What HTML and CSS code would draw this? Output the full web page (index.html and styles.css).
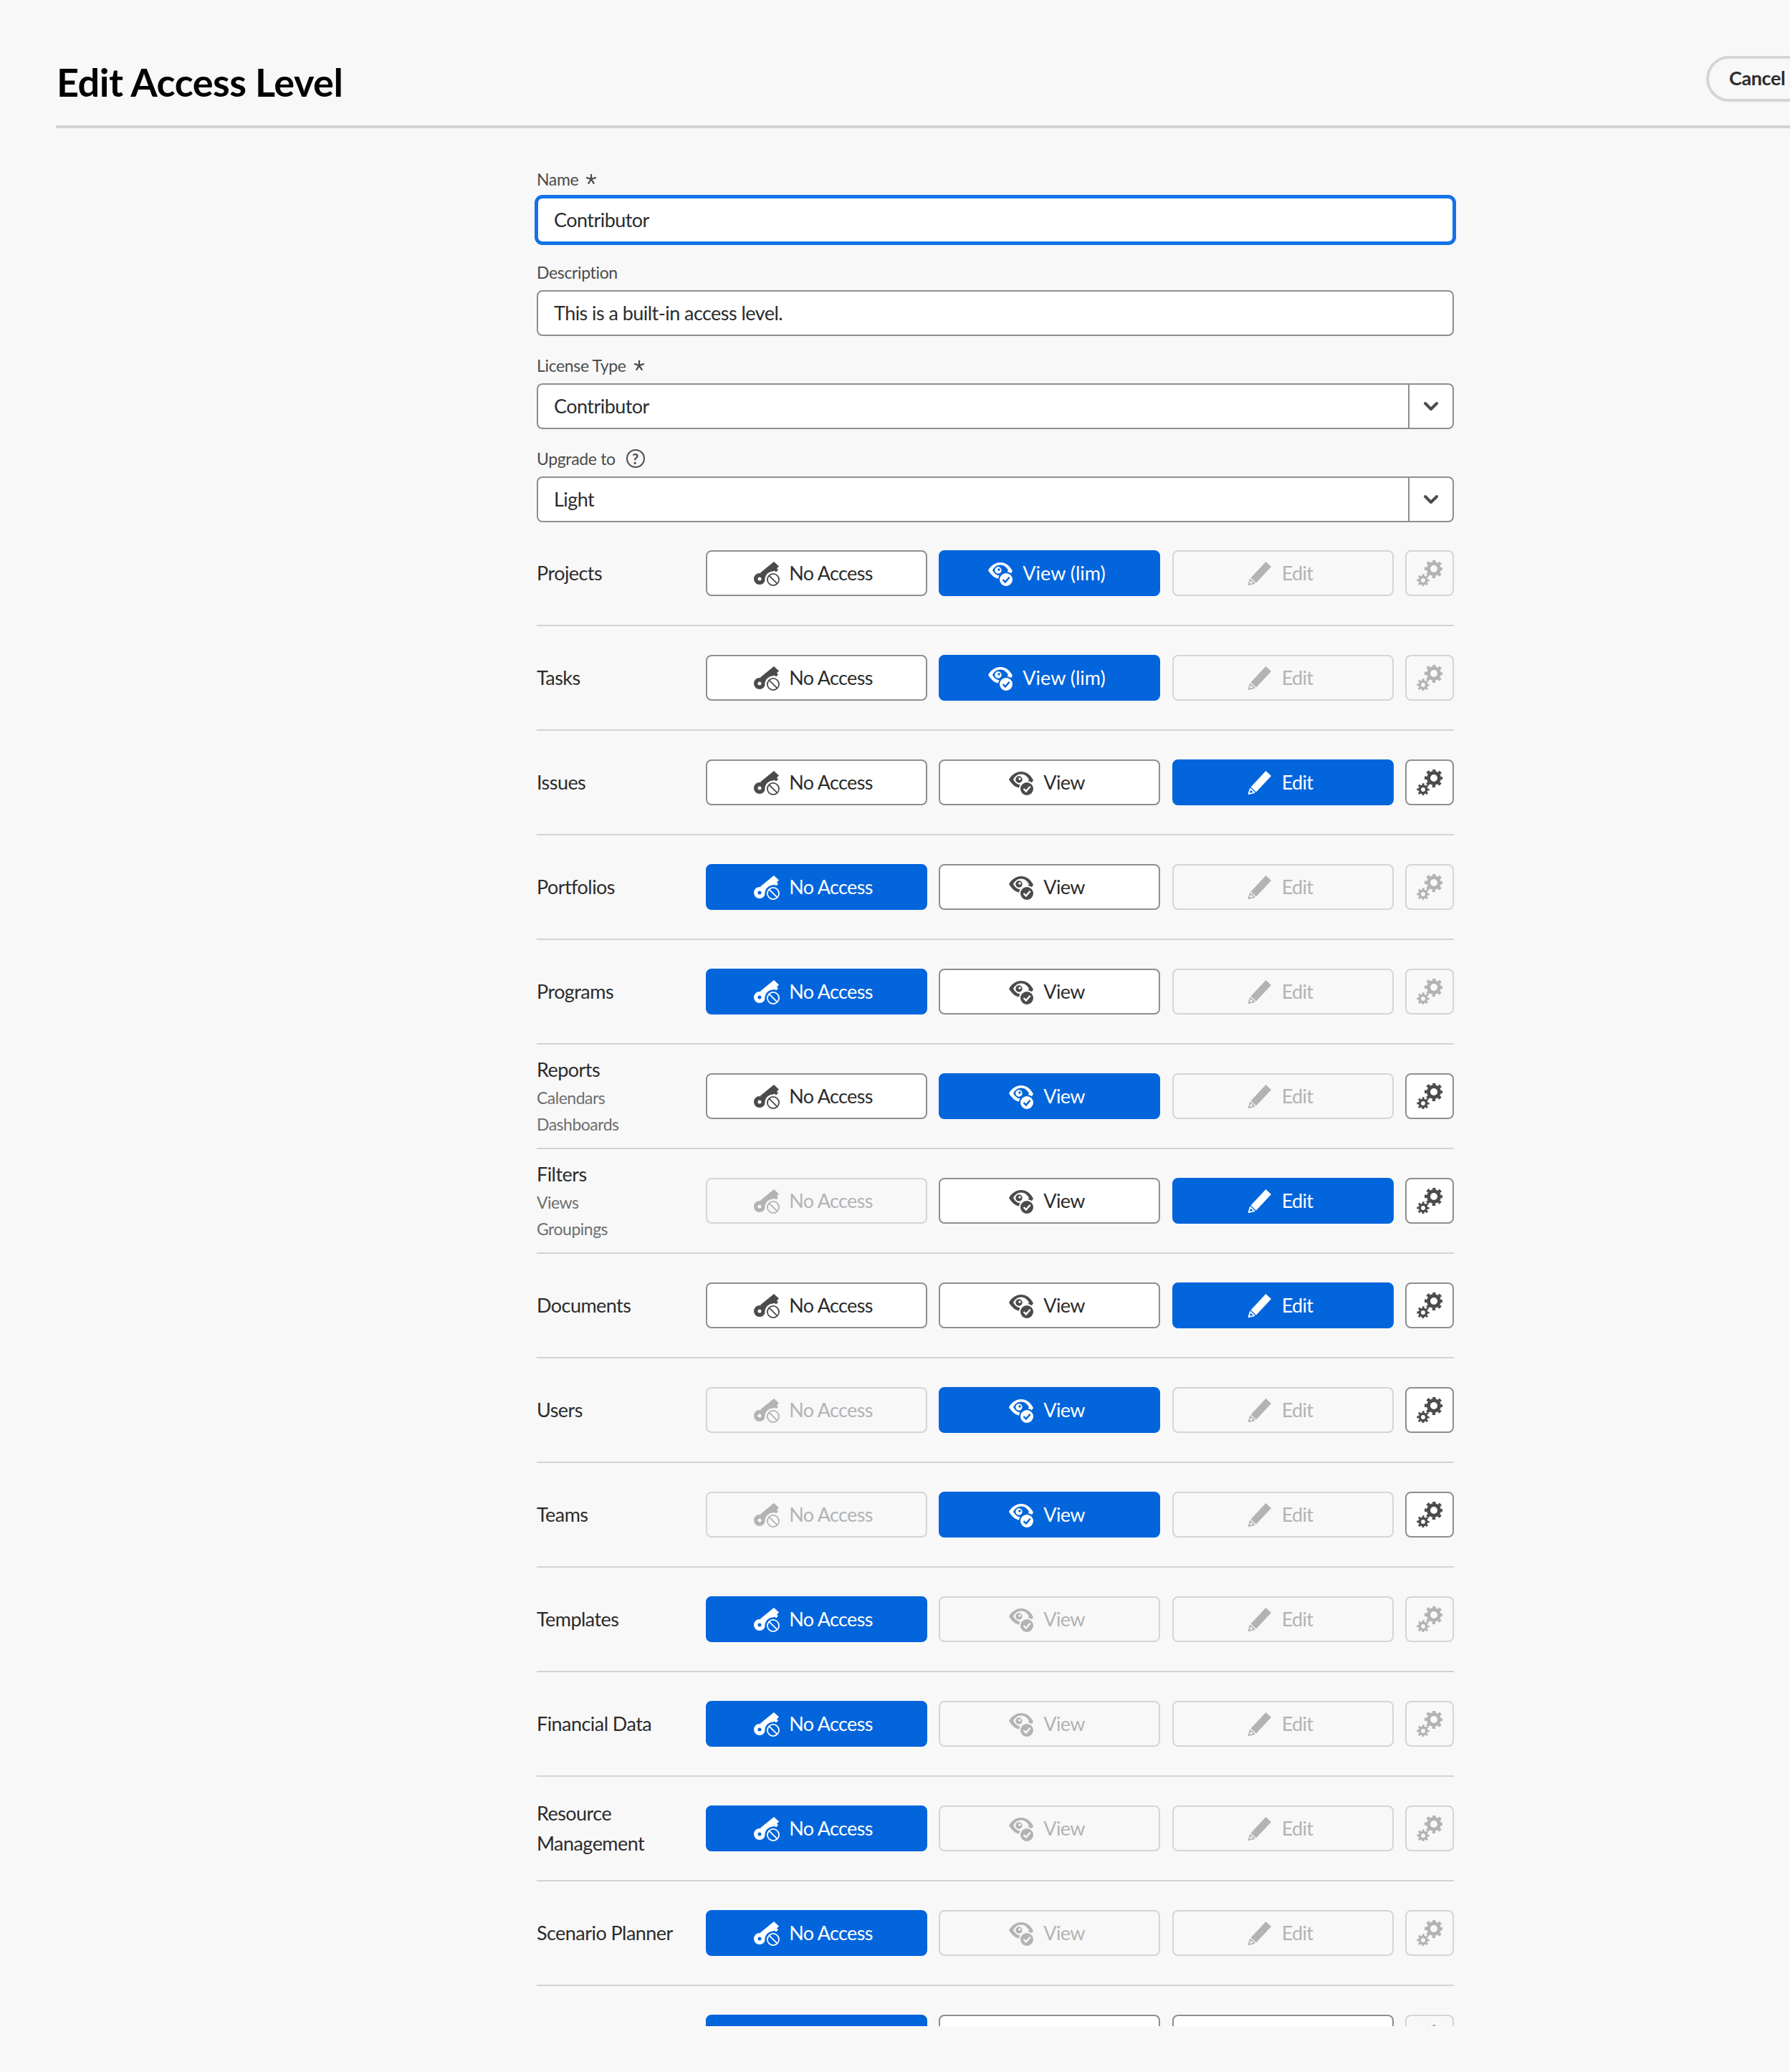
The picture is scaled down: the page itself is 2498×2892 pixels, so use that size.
FILE: index.html
```html
<!DOCTYPE html>
<html lang="en">
<head>
<meta charset="utf-8">
<title>Edit Access Level</title>
<link rel="stylesheet" href="styles.css">
</head>
<body>
<svg class="defs" width="0" height="0" aria-hidden="true">
  <defs>
    <mask id="m-key"><rect width="36" height="36" fill="#fff"/><circle cx="27" cy="27" r="11.5" fill="#000"/></mask>
    <mask id="m-eye"><rect width="36" height="36" fill="#fff"/><circle cx="26" cy="27" r="11" fill="#000"/></mask>
    <mask id="m-chk"><rect width="36" height="36" fill="#fff"/><path d="M21.5 27l3.4 3.4 5.8-6.6" fill="none" stroke="#000" stroke-width="2.4"/></mask>
    <symbol id="i-key" viewBox="0 0 36 36">
      <g mask="url(#m-key)">
        <path fill-rule="evenodd" d="M8 18a8 8 0 1 1 0 16 8 8 0 0 1 0-16zM8 23.500a2.500 2.500 0 1 0 0 5 2.500 2.500 0 0 0 0-5z"/>
        <path d="M9 17.500L28 2l7 6.500-3 3 2 2-3 3-2.500-2-2 2 1.500 1.500-8 7-5-.5z"/>
      </g>
      <circle cx="27" cy="27" r="8.100" fill="none" stroke="currentColor" stroke-width="1.800"/>
      <path d="M21.300 21.300l11.400 11.400" stroke="currentColor" stroke-width="1.800"/>
    </symbol>
    <symbol id="i-view" viewBox="0 0 36 36">
      <g mask="url(#m-eye)">
        <path fill-rule="evenodd" d="M1 14C5 7 11 3 18 3s13 4 17 12c-4 7-10 11-17 11S5 21 1 14zM7 14c2.800 4.800 6.200 7.500 11 7.500s8.200-2.700 11-7.500c-2.800-4.800-6.200-7.500-11-7.500S9.800 9.200 7 14z"/>
        <path fill-rule="evenodd" d="M15 9.300a4.700 4.700 0 1 1 0 9.400 4.700 4.700 0 0 1 0-9.400zM16 11.200a1.800 1.800 0 1 0 0 3.600 1.800 1.800 0 0 0 0-3.600z"/>
      </g>
      <circle cx="26" cy="27" r="9" mask="url(#m-chk)"/>
    </symbol>
    <symbol id="i-edit" viewBox="0 0 36 36">
      <path d="M26.500 2l7.500 7-21 22.500-7.500-7z"/>
      <path d="M4.800 26.800l5.700 5.400-7.900 1.900z" fill="none" stroke="currentColor" stroke-width="1.800" stroke-linejoin="round"/>
    </symbol>
    <symbol id="i-gear" viewBox="0 0 36 36">
      <circle cx="24" cy="12" r="10.500" fill="none" stroke="currentColor" stroke-width="5" stroke-dasharray="4.120 4.120" stroke-dashoffset="2.060"/>
      <circle cx="24" cy="12" r="7.500" fill="none" stroke="currentColor" stroke-width="5"/>
      <circle cx="9" cy="28" r="7" fill="none" stroke="currentColor" stroke-width="3.400" stroke-dasharray="2.750 2.750" stroke-dashoffset="1.375"/>
      <circle cx="9" cy="28" r="4.700" fill="none" stroke="currentColor" stroke-width="3.600"/>
    </symbol>
    <symbol id="i-star" viewBox="0 0 14 14">
      <path d="M7 7V.8M7 7L1 5.200M7 7l6-1.800M7 7l-3.600 5.800M7 7l3.600 5.800" fill="none" stroke="currentColor" stroke-width="2"/>
    </symbol>
  </defs>
</svg>

<header class="page-head">
  <h1 class="page-title">Edit Access Level</h1>
  <button class="cancel" type="button">Cancel</button>
</header>

<main class="scroller">
  <form class="form">
    <div class="field">
      <div class="field-label">Name <svg class="star"><use href="#i-star"/></svg></div>
      <div class="input is-focus">Contributor</div>
    </div>
    <div class="field">
      <div class="field-label">Description</div>
      <div class="input">This is a built-in access level.</div>
    </div>
    <div class="field">
      <div class="field-label">License Type <svg class="star"><use href="#i-star"/></svg></div>
      <div class="select"><div class="select-value">Contributor</div><div class="select-btn"><svg class="chev" viewBox="0 0 22 14"><path d="M3 3l8 8 8-8"/></svg></div></div>
    </div>
    <div class="field">
      <div class="field-label">Upgrade to <span class="help">?</span></div>
      <div class="select"><div class="select-value">Light</div><div class="select-btn"><svg class="chev" viewBox="0 0 22 14"><path d="M3 3l8 8 8-8"/></svg></div></div>
    </div>

    <div class="rows">
      <div class="row"><div class="row-label"><div>Projects</div></div><div class="btns">
        <button type="button" class="btn"><svg class="ic"><use href="#i-key"/></svg>No Access</button>
        <button type="button" class="btn on wide"><svg class="ic"><use href="#i-view"/></svg>View (lim)</button>
        <button type="button" class="btn off"><svg class="ic"><use href="#i-edit"/></svg>Edit</button>
        <button type="button" class="btn gear off"><svg class="ic"><use href="#i-gear"/></svg></button>
      </div></div>

      <div class="row"><div class="row-label"><div>Tasks</div></div><div class="btns">
        <button type="button" class="btn"><svg class="ic"><use href="#i-key"/></svg>No Access</button>
        <button type="button" class="btn on wide"><svg class="ic"><use href="#i-view"/></svg>View (lim)</button>
        <button type="button" class="btn off"><svg class="ic"><use href="#i-edit"/></svg>Edit</button>
        <button type="button" class="btn gear off"><svg class="ic"><use href="#i-gear"/></svg></button>
      </div></div>

      <div class="row"><div class="row-label"><div>Issues</div></div><div class="btns">
        <button type="button" class="btn"><svg class="ic"><use href="#i-key"/></svg>No Access</button>
        <button type="button" class="btn"><svg class="ic"><use href="#i-view"/></svg>View</button>
        <button type="button" class="btn on"><svg class="ic"><use href="#i-edit"/></svg>Edit</button>
        <button type="button" class="btn gear"><svg class="ic"><use href="#i-gear"/></svg></button>
      </div></div>

      <div class="row"><div class="row-label"><div>Portfolios</div></div><div class="btns">
        <button type="button" class="btn on"><svg class="ic"><use href="#i-key"/></svg>No Access</button>
        <button type="button" class="btn"><svg class="ic"><use href="#i-view"/></svg>View</button>
        <button type="button" class="btn off"><svg class="ic"><use href="#i-edit"/></svg>Edit</button>
        <button type="button" class="btn gear off"><svg class="ic"><use href="#i-gear"/></svg></button>
      </div></div>

      <div class="row"><div class="row-label"><div>Programs</div></div><div class="btns">
        <button type="button" class="btn on"><svg class="ic"><use href="#i-key"/></svg>No Access</button>
        <button type="button" class="btn"><svg class="ic"><use href="#i-view"/></svg>View</button>
        <button type="button" class="btn off"><svg class="ic"><use href="#i-edit"/></svg>Edit</button>
        <button type="button" class="btn gear off"><svg class="ic"><use href="#i-gear"/></svg></button>
      </div></div>

      <div class="row"><div class="row-label"><div>Reports</div><div class="sub">Calendars</div><div class="sub">Dashboards</div></div><div class="btns">
        <button type="button" class="btn"><svg class="ic"><use href="#i-key"/></svg>No Access</button>
        <button type="button" class="btn on"><svg class="ic"><use href="#i-view"/></svg>View</button>
        <button type="button" class="btn off"><svg class="ic"><use href="#i-edit"/></svg>Edit</button>
        <button type="button" class="btn gear"><svg class="ic"><use href="#i-gear"/></svg></button>
      </div></div>

      <div class="row"><div class="row-label"><div>Filters</div><div class="sub">Views</div><div class="sub">Groupings</div></div><div class="btns">
        <button type="button" class="btn off"><svg class="ic"><use href="#i-key"/></svg>No Access</button>
        <button type="button" class="btn"><svg class="ic"><use href="#i-view"/></svg>View</button>
        <button type="button" class="btn on"><svg class="ic"><use href="#i-edit"/></svg>Edit</button>
        <button type="button" class="btn gear"><svg class="ic"><use href="#i-gear"/></svg></button>
      </div></div>

      <div class="row"><div class="row-label"><div>Documents</div></div><div class="btns">
        <button type="button" class="btn"><svg class="ic"><use href="#i-key"/></svg>No Access</button>
        <button type="button" class="btn"><svg class="ic"><use href="#i-view"/></svg>View</button>
        <button type="button" class="btn on"><svg class="ic"><use href="#i-edit"/></svg>Edit</button>
        <button type="button" class="btn gear"><svg class="ic"><use href="#i-gear"/></svg></button>
      </div></div>

      <div class="row"><div class="row-label"><div>Users</div></div><div class="btns">
        <button type="button" class="btn off"><svg class="ic"><use href="#i-key"/></svg>No Access</button>
        <button type="button" class="btn on"><svg class="ic"><use href="#i-view"/></svg>View</button>
        <button type="button" class="btn off"><svg class="ic"><use href="#i-edit"/></svg>Edit</button>
        <button type="button" class="btn gear"><svg class="ic"><use href="#i-gear"/></svg></button>
      </div></div>

      <div class="row"><div class="row-label"><div>Teams</div></div><div class="btns">
        <button type="button" class="btn off"><svg class="ic"><use href="#i-key"/></svg>No Access</button>
        <button type="button" class="btn on"><svg class="ic"><use href="#i-view"/></svg>View</button>
        <button type="button" class="btn off"><svg class="ic"><use href="#i-edit"/></svg>Edit</button>
        <button type="button" class="btn gear"><svg class="ic"><use href="#i-gear"/></svg></button>
      </div></div>

      <div class="row"><div class="row-label"><div>Templates</div></div><div class="btns">
        <button type="button" class="btn on"><svg class="ic"><use href="#i-key"/></svg>No Access</button>
        <button type="button" class="btn off"><svg class="ic"><use href="#i-view"/></svg>View</button>
        <button type="button" class="btn off"><svg class="ic"><use href="#i-edit"/></svg>Edit</button>
        <button type="button" class="btn gear off"><svg class="ic"><use href="#i-gear"/></svg></button>
      </div></div>

      <div class="row"><div class="row-label"><div>Financial Data</div></div><div class="btns">
        <button type="button" class="btn on"><svg class="ic"><use href="#i-key"/></svg>No Access</button>
        <button type="button" class="btn off"><svg class="ic"><use href="#i-view"/></svg>View</button>
        <button type="button" class="btn off"><svg class="ic"><use href="#i-edit"/></svg>Edit</button>
        <button type="button" class="btn gear off"><svg class="ic"><use href="#i-gear"/></svg></button>
      </div></div>

      <div class="row"><div class="row-label"><div>Resource<br>Management</div></div><div class="btns">
        <button type="button" class="btn on"><svg class="ic"><use href="#i-key"/></svg>No Access</button>
        <button type="button" class="btn off"><svg class="ic"><use href="#i-view"/></svg>View</button>
        <button type="button" class="btn off"><svg class="ic"><use href="#i-edit"/></svg>Edit</button>
        <button type="button" class="btn gear off"><svg class="ic"><use href="#i-gear"/></svg></button>
      </div></div>

      <div class="row"><div class="row-label"><div>Scenario Planner</div></div><div class="btns">
        <button type="button" class="btn on"><svg class="ic"><use href="#i-key"/></svg>No Access</button>
        <button type="button" class="btn off"><svg class="ic"><use href="#i-view"/></svg>View</button>
        <button type="button" class="btn off"><svg class="ic"><use href="#i-edit"/></svg>Edit</button>
        <button type="button" class="btn gear off"><svg class="ic"><use href="#i-gear"/></svg></button>
      </div></div>

      <div class="row"><div class="row-label"></div><div class="btns">
        <button type="button" class="btn on" aria-label="No Access"><svg class="ic"><use href="#i-key"/></svg></button>
        <button type="button" class="btn" aria-label="View"><svg class="ic"><use href="#i-view"/></svg></button>
        <button type="button" class="btn" aria-label="Edit"><svg class="ic"><use href="#i-edit"/></svg></button>
        <button type="button" class="btn gear off"><svg class="ic"><use href="#i-gear"/></svg></button>
      </div></div>
    </div>
  </form>
</main>
</body>
</html>
```
FILE: styles.css
```css
* { box-sizing: border-box; }
html, body { margin: 0; height: 100%; }
body {
  width: 2498px;
  height: 2892px;
  overflow: hidden;
  background: #f8f8f8;
  color: #2c2c2c;
  font-family: "Lato", "Noto Sans", sans-serif;
  font-size: 27px;
  letter-spacing: -0.55px;
  display: flex;
  flex-direction: column;
}
.defs { position: absolute; }

.page-head {
  flex: none;
  height: 179px;
  margin-left: 78px;
  padding-top: 78px;
  border-bottom: 4px solid #d3d3d3;
  display: flex;
  justify-content: space-between;
  align-items: flex-start;
}
.page-title {
  margin: 2px 0 0 1px;
  font-size: 54px;
  line-height: 70px;
  font-weight: 700;
  color: #000;
  letter-spacing: -0.5px;
}
.cancel {
  width: 180px;
  height: 64px;
  margin-right: -63px;
  padding: 0 0 4px 28px;
  text-align: left;
  background: transparent;
  border: 4px solid #d5d5d5;
  border-radius: 32px;
  font: 700 27px "Lato", sans-serif;
  letter-spacing: -0.4px;
  color: #2c2c2c;
}

.scroller {
  height: 2649px;
  overflow: hidden;
  padding: 0 469px 0 749px;
}
.form { width: 1280px; padding-top: 52px; }

.field { height: 130px; }
.field-label {
  height: 38px;
  margin-bottom: 6px;
  display: flex;
  align-items: center;
  gap: 5px;
  font-size: 23px;
  letter-spacing: -0.35px;
  color: #4b4b4b;
}
.star { width: 16px; height: 16px; color: #4b4b4b; margin-left: 5px; }
.help {
  width: 26px;
  height: 26px;
  margin-left: 10px;
  border: 2px solid #4b4b4b;
  border-radius: 50%;
  font-size: 20px;
  font-weight: 700;
  line-height: 22px;
  letter-spacing: 0;
  text-align: center;
}

.input, .select-value {
  height: 64px;
  padding: 0 22px 2px;
  display: flex;
  align-items: center;
  background: #fff;
  border: 2px solid #8e8e8e;
  border-radius: 8px;
  color: #2c2c2c;
}
.input.is-focus {
  border-color: #1473e6;
  box-shadow: 0 0 0 3px #1473e6;
}
.select { display: flex; height: 64px; }
.select-value { flex: 1; border-radius: 8px 0 0 8px; border-right: 0; }
.select-btn {
  width: 64px;
  display: flex;
  align-items: center;
  justify-content: center;
  background: #fff;
  border: 2px solid #8e8e8e;
  border-radius: 0 8px 8px 0;
}
.chev { width: 22px; height: 14px; fill: none; stroke: #4b4b4b; stroke-width: 4; stroke-linecap: round; stroke-linejoin: round; }

.rows { margin-top: -23px; }
.row {
  height: 146px;
  border-bottom: 2px solid #d3d3d3;
  display: flex;
  align-items: center;
}
.row-label { width: 236px; line-height: 42px; }
.sub { font-size: 23px; letter-spacing: -0.5px; line-height: 37px; color: #6e6e6e; }
.btns { display: flex; gap: 16.500px; }
.btn {
  width: 309px;
  height: 64px;
  padding: 0 8px 2px 0;
  display: flex;
  align-items: center;
  justify-content: center;
  gap: 13px;
  background: #fff;
  border: 2px solid #8e8e8e;
  border-radius: 8px;
  font: 400 27px "Lato", sans-serif;
  letter-spacing: -0.65px;
  color: #2c2c2c;
}
.btn.wide { letter-spacing: 0; }
.ic { width: 36px; height: 36px; margin-top: 2px; fill: currentColor; color: #4b4b4b; }
.btn.on { background: #0265dc; border-color: #0265dc; color: #fff; }
.btn.on .ic { color: #fff; }
.btn.off { background: transparent; border-color: #d5d5d5; color: #b3b3b3; }
.btn.off .ic { color: #b3b3b3; }
.btn.gear { width: 68px; padding: 0; }
.btn.gear .ic { margin-top: 0; }
```
